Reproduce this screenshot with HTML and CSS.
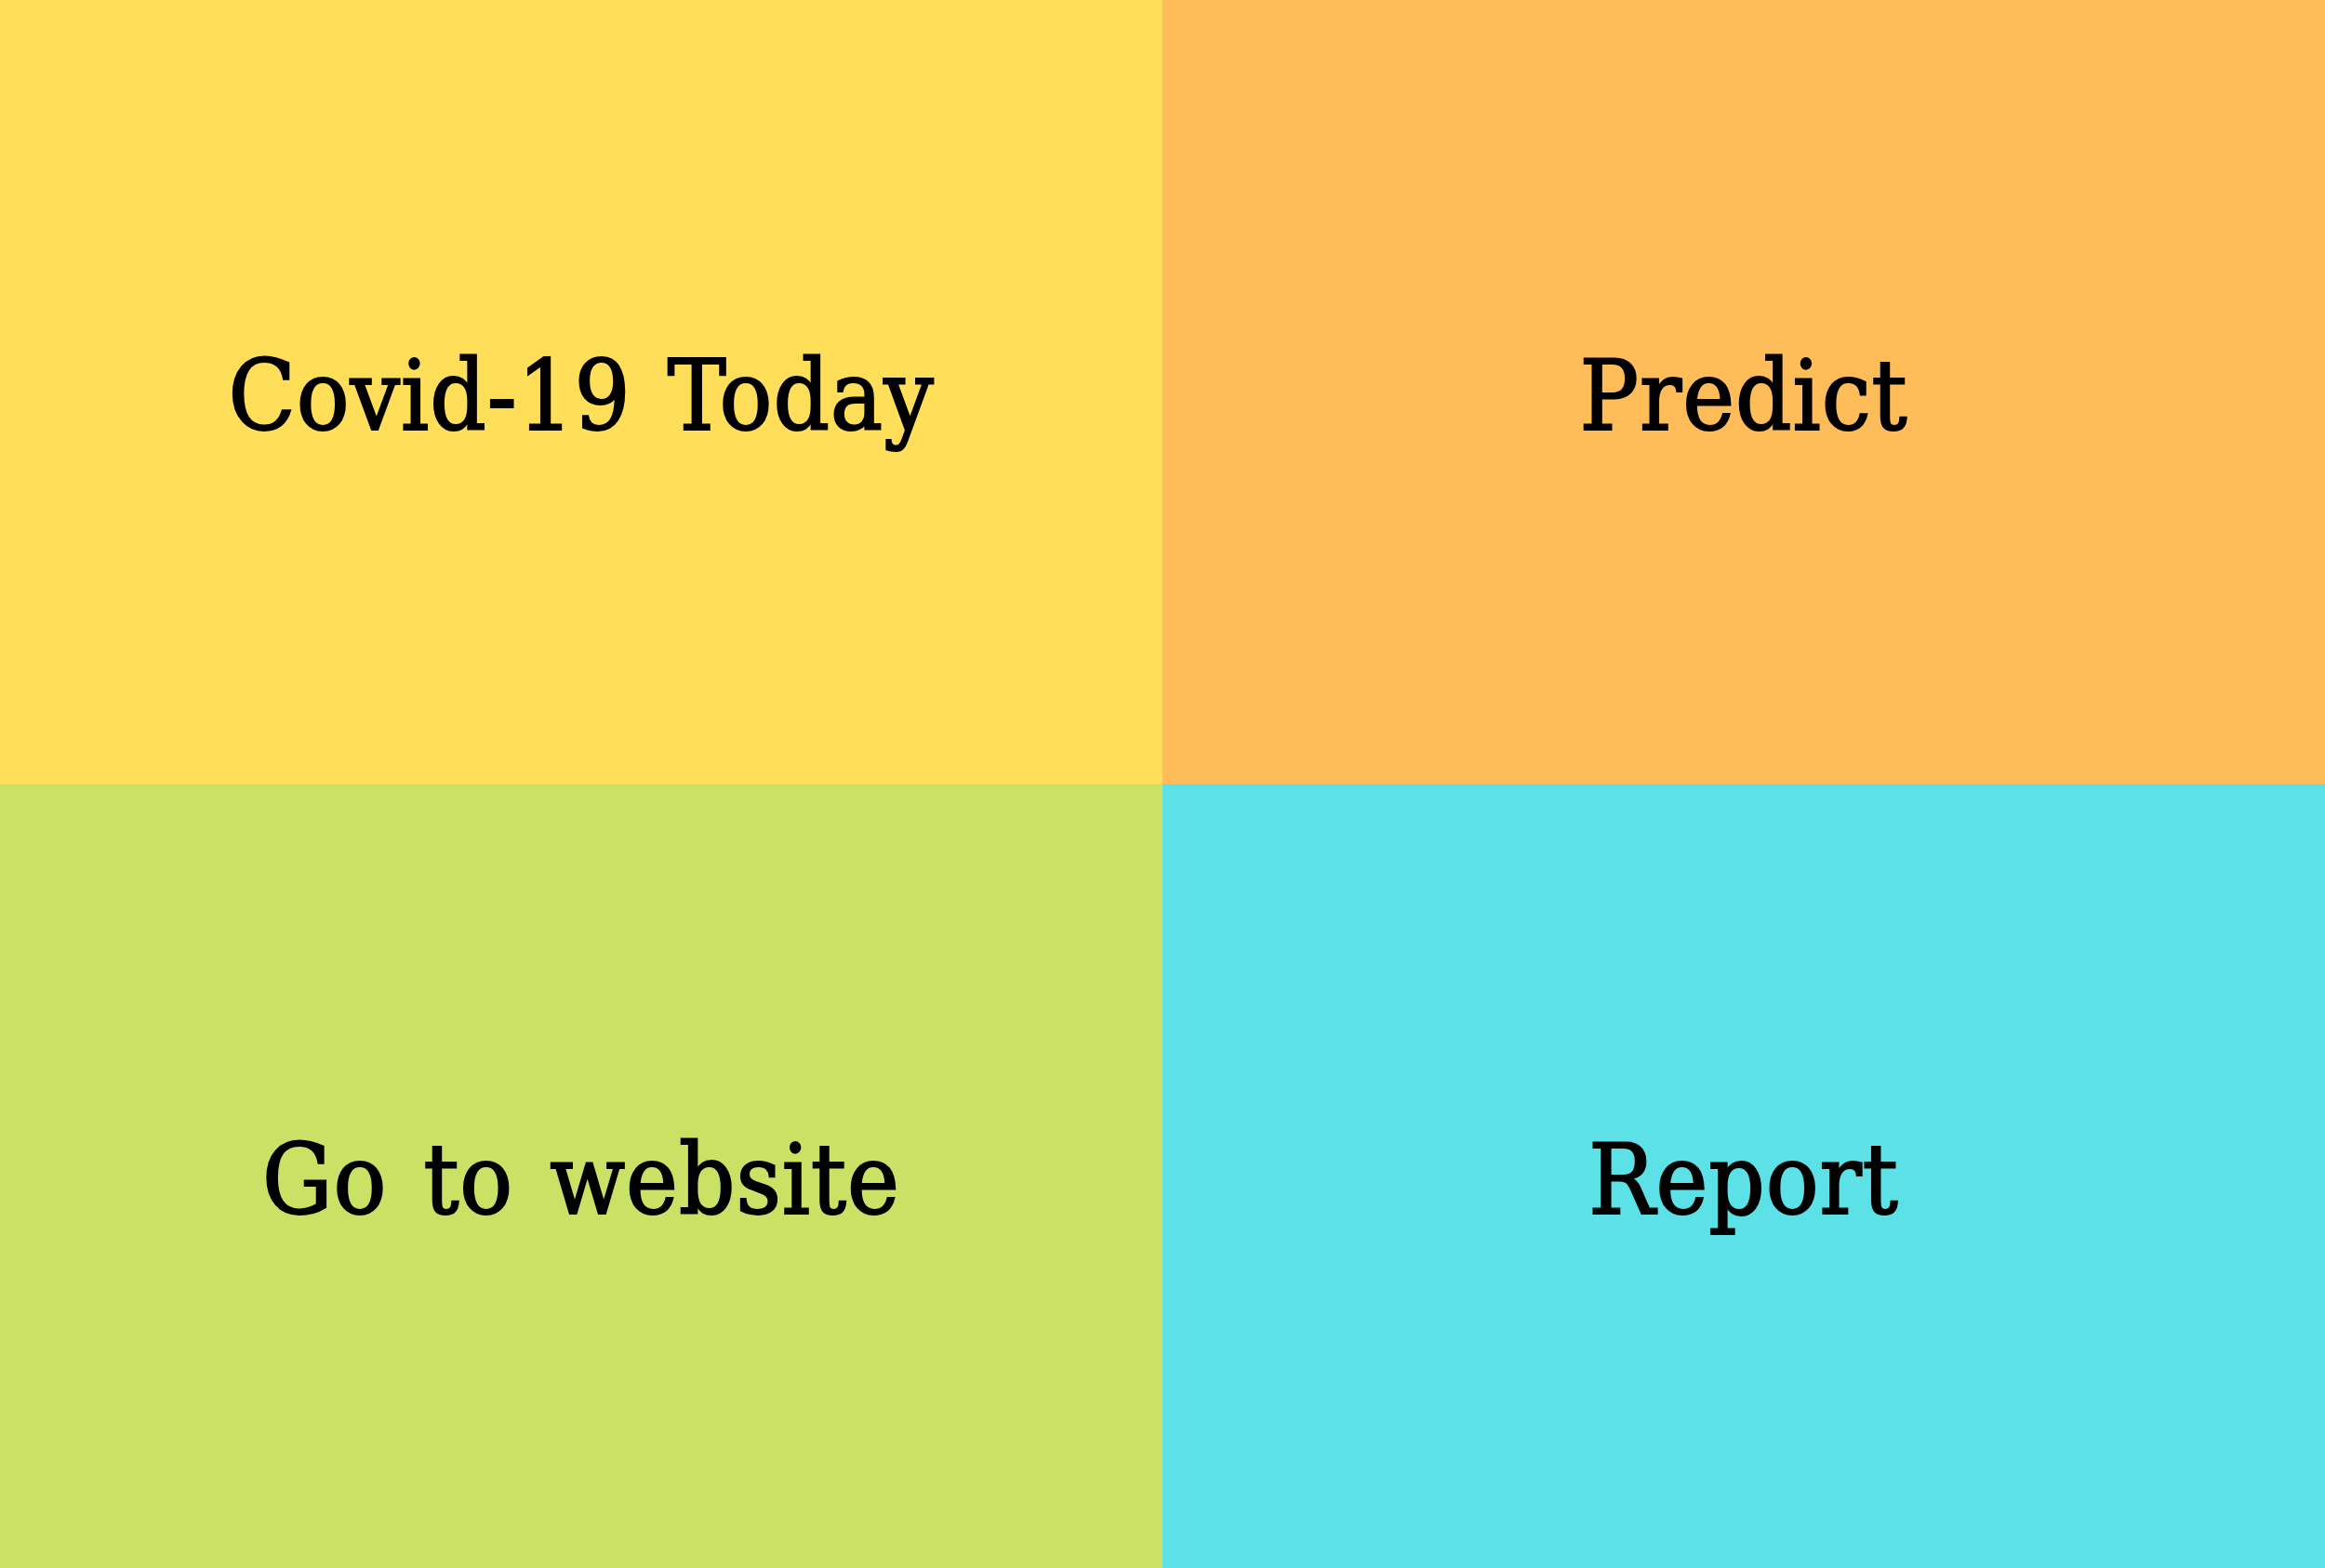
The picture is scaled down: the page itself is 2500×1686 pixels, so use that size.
FILE: index.html
```
<!DOCTYPE html>
<html lang="en">
<head>
<meta charset="utf-8">
<title>Covid-19 Menu</title>
<link rel="stylesheet" href="styles.css">
</head>
<body>
<main class="grid">
  <a class="tile tile-today" href="#">Covid-19 Today</a>
  <a class="tile tile-predict" href="#">Predict</a>
  <a class="tile tile-website" href="#">Go to website</a>
  <a class="tile tile-report" href="#">Report</a>
</main>
</body>
</html>
```
FILE: styles.css
```
html, body {
  margin: 0;
  padding: 0;
  width: 100%;
  height: 100%;
  overflow: hidden;
}
.grid {
  display: grid;
  grid-template-columns: 1250px 1250px;
  grid-template-rows: 843px 843px;
  width: 2500px;
  height: 1686px;
}
.tile {
  display: flex;
  align-items: center;
  justify-content: center;
  padding-top: 10px;
  color: #000;
  text-decoration: none;
  font-family: "DejaVu Serif Condensed", "DejaVu Serif", serif;
  font-size: 105px;
  letter-spacing: 1px;
  word-spacing: 8px;
  -webkit-text-stroke: 2px #000;
  line-height: 1;
}
.tile-today { background: #ffde59; }
.tile-predict { background: #ffbd59; }
.tile-website { background: #c9e265; }
.tile-report { background: #5ce1e6; }
```
